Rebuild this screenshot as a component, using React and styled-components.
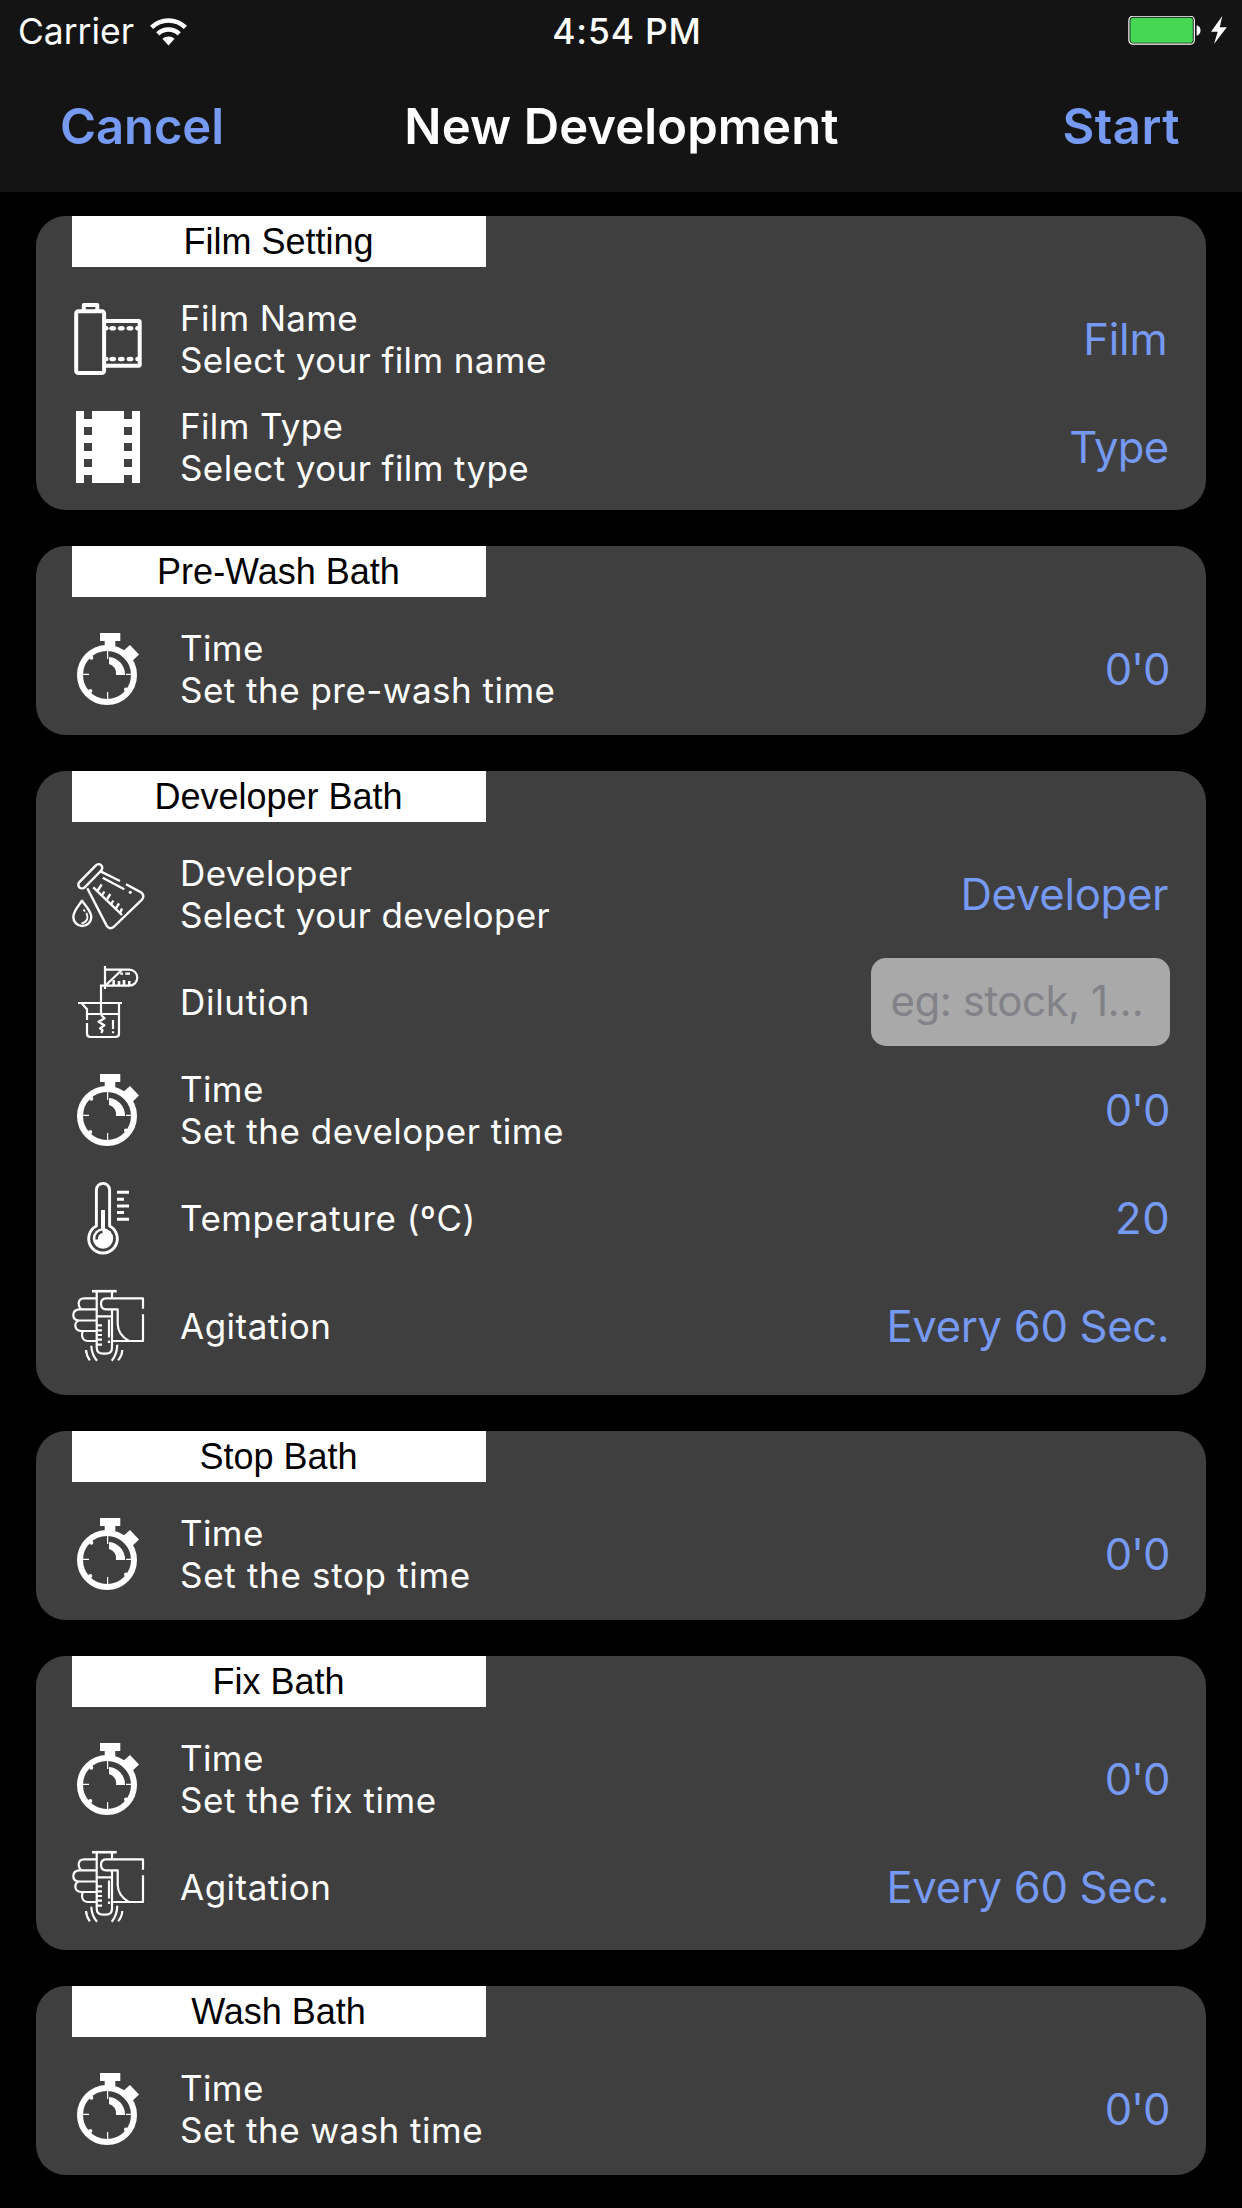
import React from 'react';
import styled, { createGlobalStyle } from 'styled-components';

const GlobalStyle = createGlobalStyle`
  *, *::before, *::after { box-sizing: border-box; }
  body { margin: 0; background: #000; }
`;

const Screen = styled.div`
  width: 1242px;
  height: 2208px;
  overflow: hidden;
  background: #000;
  color: #fff;
  font-family: Inter, "Liberation Sans", sans-serif;
`;

const Header = styled.header`
  height: 192px;
  background: #141414;
  display: flex;
  flex-direction: column;
`;

const StatusBar = styled.div`
  height: 60px;
  padding: 3px 14px 0 18px;
  display: grid;
  grid-template-columns: 1fr auto 1fr;
  align-items: center;
  font-size: 35.4px;
  line-height: 44px;
`;

const Carrier = styled.div`
  display: flex;
  align-items: center;
  gap: 16px;
`;

const Clock = styled.span`
  font-weight: 500;
  letter-spacing: 0.85px;
  padding-left: 8px;
`;

const Battery = styled.div`
  display: flex;
  align-items: center;
  justify-content: flex-end;
`;

const NavBar = styled.nav`
  flex: 1;
  padding: 2px 62px 0 60px;
  display: grid;
  grid-template-columns: 1fr auto 1fr;
  align-items: center;
  font-size: 49px;
  font-weight: 600;
  line-height: 60px;
`;

const NavTitle = styled.h1`
  margin: 0;
  font: inherit;
  letter-spacing: 0.1px;
  padding-left: 3px;
`;

const NavButton = styled.span`
  color: #7699f2;
  text-align: ${(p) => p.$align};
  letter-spacing: ${(p) => p.$track}px;
`;

const Sections = styled.main`
  padding: 24px 36px 0;
  display: flex;
  flex-direction: column;
  gap: 36px;
`;

const Card = styled.section`
  background: #3f3f3f;
  border-radius: 30px;
  padding: 0 36px ${(p) => p.$foot}px;
`;

const Tag = styled.h2`
  margin: 0 0 36px;
  padding-right: 1px;
  width: 414px;
  height: 51px;
  background: #fff;
  color: #000;
  font: 400 36px/52px "Liberation Sans", Arial, sans-serif;
  text-align: center;
`;

const Rows = styled.div`
  display: flex;
  flex-direction: column;
  gap: 36px;
`;

const Row = styled.div`
  height: 72px;
  display: flex;
  align-items: center;
`;

const IconBox = styled.svg`
  width: 72px;
  height: 72px;
  flex: none;
  margin-right: 36px;
  overflow: visible;
  fill: none;
  stroke: #fff;
  stroke-width: ${(p) => p.$weight || 2.4}px;
  stroke-linejoin: round;
`;

const Labels = styled.div`
  flex: 1;
  font-size: 35px;
  line-height: 42px;
  white-space: nowrap;
`;

const Label = styled.div`
  letter-spacing: ${(p) => p.$track}px;
`;

const Value = styled.span`
  color: #7699f2;
  font-size: 43.6px;
  line-height: 54px;
  padding-top: 2px;
  letter-spacing: ${(p) => p.$track}px;
  margin-right: ${(p) => p.$inset}px;
`;

const Field = styled.div`
  width: 299px;
  height: 88px;
  margin-right: 0.5px;
  padding: 0 20px 4px;
  display: flex;
  align-items: center;
  border-radius: 15px;
  background: #a9a9a9;
  color: #828288;
  font-size: 42px;
  letter-spacing: -0.49px;
  white-space: nowrap;
`;

const FilmRoll = () => (
  <IconBox viewBox="0 0 72 72" $weight={4}>
    <rect x="4.2" y="8.2" width="27.9" height="61.9" rx="2.2" />
    <path d="M11.8 8V2H25.3V8" />
    <path d="M33 18H66.5q1.2 0 1.2 1.2V61.6q0 1.2-1.2 1.2H33" />
    <g fill="#fff" stroke="none">
      {[25.3, 56].map((y) => (
        <g key={y}>
          {[34.2, 40.7, 49.3, 58, 65.6].map((x) => (
            <ellipse key={x} cx={x} cy={y} rx={x < 36 || x > 60 ? 2.4 : 3.4} ry="2.3" />
          ))}
        </g>
      ))}
    </g>
  </IconBox>
);

const FilmStrip = () => (
  <IconBox viewBox="0 0 72 72">
    <path
      fill="#fff"
      stroke="none"
      fillRule="evenodd"
      d="M4 0H68V72H4ZM12 0V8H20V0ZM12 16V24H20V16ZM12 32V40H20V32ZM12 48V56H20V48ZM12 64V72H20V64ZM52 0V8H60V0ZM52 16V24H60V16ZM52 32V40H60V32ZM52 48V56H60V48ZM52 64V72H60V64Z"
    />
  </IconBox>
);

const Stopwatch = () => (
  <IconBox viewBox="0 0 72 72" $weight={6}>
    <circle cx="35" cy="42" r="27" />
    <g fill="#fff" stroke="none">
      <path d="M28 0H48.3V8H43.3V14H32.7V8H28Z" />
      <path d="M58 12L67 21.5L60 28.3L50 19Z" />
      <path d="M37 24A17.5 17.5 0 0 1 53 42H44A9.5 9.5 0 0 0 37 31Z" />
      <circle cx="19.3" cy="24.8" r="2" />
      <circle cx="18.3" cy="58" r="2" />
      <circle cx="54" cy="56.5" r="2" />
    </g>
    <path strokeWidth="1.2" d="M35.6 17V26M35.6 59V67M10 41.4H17M54 41.4H61" />
  </IconBox>
);

const Flask = () => (
  <IconBox viewBox="0 0 72 72">
    <rect x="2.8" y="14.6" width="31" height="7.4" rx="3.7" transform="rotate(-45.5 18.3 18.3)" />
    <path d="M15.3 30.3L34.6 67.6Q37.2 72 41.6 69L70 41.6Q72.8 38 69.5 34.6L54 26.3" />
    <path d="M29 13.7L48 23M30.7 19.7L52.3 31.3" />
    <circle cx="58.3" cy="34.3" r="1.6" fill="#fff" stroke="none" />
    <path d="M21.3 29.3L50 57" />
    <path d="M25.5 33L29.6 26.5M30 37.5L32.3 33.5M34.6 42L38.3 36M39 46.5L41.3 42.5M43.6 51L47 45.3M48 55.3L50 50.5" />
    <path d="M10 42.7C7 47.5 1.3 53 1.3 59A8.9 8.9 0 0 0 19.3 59C19.3 53 13 47.5 10 42.7Z" />
    <path strokeWidth="1.8" d="M11.5 51.5L13 53.5M14.3 54.8Q18 63 9.5 65.5" />
  </IconBox>
);

const Beaker = () => (
  <IconBox viewBox="0 0 72 72" $weight={2.2}>
    <path d="M33 0V23M33 3.7H57.3a8 8 0 0 1 0 16H28M34 19L49.3 4.5" />
    <path d="M48.3 7.7H51M53.3 7.7H58" />
    <path strokeWidth="2.6" d="M41.7 14V19M47 15V19M52 14V19M57.3 15V19" />
    <path d="M29 19V49" />
    <path d="M6 37H50M10 37.5L15 43.3V54M15 57V67.5Q15 71 18.5 71H43.5Q47 71 47 67.5V37M15 48H47" />
    <path d="M29 49L32.6 52.3L26.5 55.7L32.3 59.3L28 62.3L30.6 64.2L29.3 67" />
    <path d="M41 54V63M41 65.2V67.2" />
  </IconBox>
);

const Thermometer = () => (
  <IconBox viewBox="0 0 72 72" $weight={2.9}>
    <path d="M24.4 44V8A6.6 6.6 0 0 1 37.6 8V44A14.3 14.3 0 1 1 24.4 44Z" />
    <circle cx="31" cy="56.5" r="10.2" fill="#fff" stroke="none" />
    <path strokeWidth="4" d="M31 28V50" />
    <path stroke="#3f3f3f" strokeWidth="2.6" d="M24.5 57.5Q24.5 51 30.5 49.8" />
    <path strokeWidth="3" d="M45 10.3H57M45 17.3H52M45 24H57M45 30.5H52M45 37.3H57" />
  </IconBox>
);

const Agitate = () => (
  <IconBox viewBox="0 0 72 72" $weight={2.2}>
    <path strokeWidth="2.6" d="M20 1.2H44.7" />
    <path d="M24.7 1V57.5Q24.7 63.6 31 63.6H34Q40 63.6 40 57.5V20M40 1V8M25 26.3H40" />
    <path d="M25 35.3H30M25 40.3H30M25 45H30M25 49.7H30M25 54.7H30" />
    <path d="M37 29.5V47.5M37 50.5V53" />
    <path d="M25 8.3H12Q7 8.3 6.6 13.5Q7 18 10 19.4M25 19.4H7Q1.3 20 1.3 25Q1.3 30.3 7 30.5H25M7 30.5Q3.3 31.5 3.3 35.5Q3.6 40.8 9 41H25M11 41Q9.8 42.5 10 45.5Q10.6 51 16 51H25" />
    <path d="M71 18.7V8.3H34Q29 8.6 29 13.7Q29 19 34 19.4H45.7V34Q46 45 57 51M71 24.3V51H41" />
    <path d="M19.3 55.7Q19.6 64.5 25 70.7M14 60Q14.5 66 17.8 70.3M45.3 54.7Q45 64.5 39.7 70.7M50.3 60Q50 66 46 70.3" />
  </IconBox>
);

const Wifi = () => (
  <svg width="37" height="28" viewBox="0 0 37 28" fill="none" stroke="#fff">
    <path strokeWidth="4.6" d="M1.6 9.4A24.2 24.2 0 0 1 35.4 9.4" />
    <path strokeWidth="4.6" d="M7.8 15.8A15.4 15.4 0 0 1 29.2 15.8" />
    <path fill="#fff" stroke="none" d="M18.5 27.5L12.4 20.8A9 9 0 0 1 24.6 20.8Z" />
  </svg>
);

const BatteryIcon = () => (
  <svg width="100" height="31" viewBox="0 0.5 100 31">
    <rect x="0.9" y="0.7" width="65.4" height="28" rx="4" fill="none" stroke="#fff" strokeWidth="1.2" />
    <rect x="2.4" y="2.2" width="62.4" height="25" rx="2.8" fill="#46d755" />
    <path d="M68.6 9.7Q72.5 10.6 72.5 14.8Q72.5 19.2 68.6 20.2Z" fill="#fff" />
    <path d="M94.3 0.5L83 16.3H89.7L86 28.6L98.8 11.7H91.8Z" fill="#fff" />
  </svg>
);

const ICONS = {
  roll: FilmRoll,
  strip: FilmStrip,
  watch: Stopwatch,
  flask: Flask,
  beaker: Beaker,
  thermo: Thermometer,
  agitate: Agitate,
};

const time = (text, track) => ({
  icon: 'watch',
  labels: [['Time', 0.4], [text, track]],
  value: ["0'0", -1.2, 0.8],
});

const agitation = {
  icon: 'agitate',
  labels: [['Agitation', 0.5]],
  value: ['Every 60 Sec.', -0.31, 0.8],
};

const SECTIONS = [
  {
    title: 'Film Setting',
    foot: 27,
    rows: [
      { icon: 'roll', labels: [['Film Name', 0.31], ['Select your film name', 0.39]], value: ['Film', -0.2, 2.6] },
      { icon: 'strip', labels: [['Film Type', 0.36], ['Select your film type', 0.4]], value: ['Type', -0.64, 1.4] },
    ],
  },
  { title: 'Pre-Wash Bath', foot: 30, rows: [time('Set the pre-wash time', 0.48)] },
  {
    title: 'Developer Bath',
    foot: 33,
    rows: [
      { icon: 'flask', labels: [['Developer', 0.38], ['Select your developer', 0.4]], value: ['Developer', -0.28, 1.8] },
      { icon: 'beaker', labels: [['Dilution', 0.7]], field: 'eg: stock, 1…' },
      time('Set the developer time', 0.52),
      { icon: 'thermo', labels: [['Temperature (ºC)', 0.52]], value: ['20', 0.6, -0.4] },
      agitation,
    ],
  },
  { title: 'Stop Bath', foot: 30, rows: [time('Set the stop time', 0.68)] },
  { title: 'Fix Bath', foot: 27, rows: [time('Set the fix time', 0.55), agitation] },
  { title: 'Wash Bath', foot: 30, rows: [time('Set the wash time', 0.48)] },
];

const SettingRow = ({ icon, labels, value, field }) => {
  const Icon = ICONS[icon];
  return (
    <Row>
      <Icon />
      <Labels>
        {labels.map(([text, track]) => (
          <Label key={text} $track={track}>{text}</Label>
        ))}
      </Labels>
      {field ? (
        <Field>{field}</Field>
      ) : (
        <Value $track={value[1]} $inset={value[2]}>{value[0]}</Value>
      )}
    </Row>
  );
};

export default function App() {
  return (
    <Screen>
      <GlobalStyle />
      <Header>
        <StatusBar>
          <Carrier>
            <span>Carrier</span>
            <Wifi />
          </Carrier>
          <Clock>4:54 PM</Clock>
          <Battery>
            <BatteryIcon />
          </Battery>
        </StatusBar>
        <NavBar>
          <NavButton $align="left" $track={-0.1}>Cancel</NavButton>
          <NavTitle>New Development</NavTitle>
          <NavButton $align="right" $track={0.48}>Start</NavButton>
        </NavBar>
      </Header>
      <Sections>
        {SECTIONS.map((s) => (
          <Card key={s.title} $foot={s.foot}>
            <Tag>{s.title}</Tag>
            <Rows>
              {s.rows.map((row, i) => (
                <SettingRow key={i} {...row} />
              ))}
            </Rows>
          </Card>
        ))}
      </Sections>
    </Screen>
  );
}
